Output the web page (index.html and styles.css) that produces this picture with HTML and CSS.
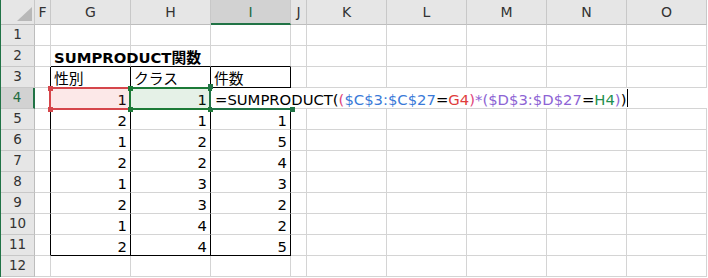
FILE: index.html
```html
<!DOCTYPE html>
<html lang="ja">
<head>
<meta charset="utf-8">
<title>SUMPRODUCT関数</title>
<link rel="stylesheet" href="styles.css">
</head>
<body>
<div class="sheet">
  <div class="r hdr">
    <div class="c corner"><span class="tri"></span></div>
    <div class="c ch">F</div><div class="c ch">G</div><div class="c ch">H</div><div class="c ch sel">I</div><div class="c ch">J</div><div class="c ch">K</div><div class="c ch">L</div><div class="c ch">M</div><div class="c ch">N</div><div class="c ch">O</div>
  </div>
  <div class="r">
    <div class="c rh">1</div>
    <div class="c"></div><div class="c"></div><div class="c"></div><div class="c"></div><div class="c"></div><div class="c"></div><div class="c"></div><div class="c"></div><div class="c"></div><div class="c"></div>
  </div>
  <div class="r">
    <div class="c rh">2</div>
    <div class="c"></div><div class="c tb ov title">SUMPRODUCT関数</div><div class="c tb"></div><div class="c tb"></div><div class="c"></div><div class="c"></div><div class="c"></div><div class="c"></div><div class="c"></div><div class="c"></div>
  </div>
  <div class="r">
    <div class="c rh">3</div>
    <div class="c tr"></div><div class="c tr tb txt">性別</div><div class="c tr tb txt">クラス</div><div class="c tr tb txt">件数</div><div class="c"></div><div class="c"></div><div class="c"></div><div class="c"></div><div class="c"></div><div class="c"></div>
  </div>
  <div class="r">
    <div class="c rh rsel">4</div>
    <div class="c tr"></div><div class="c tr num">1</div><div class="c tr num">1</div><div class="c tr"></div><div class="c"></div><div class="c"></div><div class="c"></div><div class="c"></div><div class="c"></div><div class="c"></div>
  </div>
  <div class="r">
    <div class="c rh">5</div>
    <div class="c tr"></div><div class="c tr num">2</div><div class="c tr num">1</div><div class="c tr num">1</div><div class="c"></div><div class="c"></div><div class="c"></div><div class="c"></div><div class="c"></div><div class="c"></div>
  </div>
  <div class="r">
    <div class="c rh">6</div>
    <div class="c tr"></div><div class="c tr num">1</div><div class="c tr num">2</div><div class="c tr num">5</div><div class="c"></div><div class="c"></div><div class="c"></div><div class="c"></div><div class="c"></div><div class="c"></div>
  </div>
  <div class="r">
    <div class="c rh">7</div>
    <div class="c tr"></div><div class="c tr num">2</div><div class="c tr num">2</div><div class="c tr num">4</div><div class="c"></div><div class="c"></div><div class="c"></div><div class="c"></div><div class="c"></div><div class="c"></div>
  </div>
  <div class="r">
    <div class="c rh">8</div>
    <div class="c tr"></div><div class="c tr num">1</div><div class="c tr num">3</div><div class="c tr num">3</div><div class="c"></div><div class="c"></div><div class="c"></div><div class="c"></div><div class="c"></div><div class="c"></div>
  </div>
  <div class="r">
    <div class="c rh">9</div>
    <div class="c tr"></div><div class="c tr num">2</div><div class="c tr num">3</div><div class="c tr num">2</div><div class="c"></div><div class="c"></div><div class="c"></div><div class="c"></div><div class="c"></div><div class="c"></div>
  </div>
  <div class="r">
    <div class="c rh">10</div>
    <div class="c tr"></div><div class="c tr num">1</div><div class="c tr num">4</div><div class="c tr num">2</div><div class="c"></div><div class="c"></div><div class="c"></div><div class="c"></div><div class="c"></div><div class="c"></div>
  </div>
  <div class="r">
    <div class="c rh">11</div>
    <div class="c tr"></div><div class="c tr tb num">2</div><div class="c tr tb num">4</div><div class="c tr tb num">5</div><div class="c"></div><div class="c"></div><div class="c"></div><div class="c"></div><div class="c"></div><div class="c"></div>
  </div>
  <div class="r">
    <div class="c rh">12</div>
    <div class="c"></div><div class="c"></div><div class="c"></div><div class="c"></div><div class="c"></div><div class="c"></div><div class="c"></div><div class="c"></div><div class="c"></div><div class="c"></div>
  </div>

  <div class="ref ref-red"><i class="h tl"></i><i class="h tr2"></i><i class="h bl"></i><i class="h br"></i></div>
  <div class="ref ref-green"><i class="h tl"></i><i class="h tr2"></i><i class="h bl"></i><i class="h br"></i></div>
  <div class="editor"><span class="k">=SUMPRODUCT(</span><span class="p1">(</span><span class="blue">$C$3:$C$27</span><span class="k">=</span><span class="red">G4</span><span class="p1">)</span><span class="pu">*(</span><span class="pu">$D$3:$D$27</span><span class="k">=</span><span class="gr">H4</span><span class="pu">)</span><span class="k">)</span><span class="caret"></span></div>
  <div class="active"><i class="h tl"></i><i class="h br"></i></div>
</div>
</body>
</html>
```
FILE: styles.css
```css
html, body { margin: 0; padding: 0; background: #fff; }
body { width: 708px; height: 278px; overflow: hidden; }

.sheet {
  position: relative;
  width: 707px;
  border-left: 1px solid #217346;
  font-family: "DejaVu Sans", "Noto Sans CJK JP", sans-serif;
  font-size: 14.8px;
  color: #000;
}

.r {
  display: grid;
  grid-template-columns: 34px 16px 80px 80px 80px 16px 80px 80px 80px 80px 80px;
  height: 21px;
}
.r.hdr { height: 25px; }

.c {
  box-sizing: border-box;
  border-right: 1px solid #d4d4d4;
  border-bottom: 1px solid #d4d4d4;
  display: flex;
  align-items: flex-end;
  line-height: 17px;
  padding: 0 3px 0 3px;
  white-space: nowrap;
  min-width: 0;
}

.hdr .c {
  background: #e6e6e6;
  border-right-color: #c8c8c8;
  border-bottom-color: #bdbdbd;
  justify-content: center;
  align-items: center;
  font-size: 14px;
  color: #333;
  padding: 0;
}
.hdr .c.sel {
  background: #d2d2d2;
  color: #1d6b40;
  border-bottom: 2px solid #217346;
  padding-top: 1px;
}
.corner { position: relative; }
.tri {
  position: absolute;
  right: 2px;
  bottom: 3px;
  width: 0; height: 0;
  border-left: 15px solid transparent;
  border-bottom: 14px solid #b8b8b8;
}

.rh {
  background: #e6e6e6;
  border-right-color: #bdbdbd !important;
  border-bottom-color: #c8c8c8 !important;
  justify-content: center;
  font-size: 13.5px;
  color: #333;
  padding: 0 0 2px 0;
}
.rh.rsel {
  background: #d2d2d2;
  color: #1d6b40;
  border-right: 2px solid #217346 !important;
}

.tr { border-right-color: #000; }
.tb { border-bottom-color: #000; }

.num { justify-content: flex-end; }
.title { font-weight: bold; }
.ov { overflow: visible; }

/* reference highlights */
.ref {
  position: absolute;
  box-sizing: border-box;
  top: 87px;
  height: 23px;
  width: 82px;
  border: 2px solid;
}
.ref-red { left: 48px; border-color: #d5464b; background: rgba(232, 80, 80, 0.13); }
.ref-green { left: 128px; border-color: #1c7a37; background: rgba(40, 140, 60, 0.12); }
.h {
  position: absolute;
  width: 5px; height: 5px;
}
.ref-red .h { background: #d5464b; }
.ref-green .h { background: #1c7a37; }
.h.tl { left: -3.5px; top: -3.5px; }
.h.tr2 { right: -3.5px; top: -3.5px; }
.h.bl { left: -3.5px; bottom: -3.5px; }
.h.br { right: -3.5px; bottom: -3.5px; }

.active {
  position: absolute;
  box-sizing: border-box;
  left: 208px;
  top: 87px;
  width: 82px;
  height: 23px;
  border-left: 2px solid #217346;
  border-bottom: 2px solid #217346;
}
.active .h { background: #217346; }

.editor {
  position: absolute;
  left: 211px;
  top: 88px;
  width: 496px;
  height: 20px;
  background: #fff;
  box-sizing: border-box;
  padding: 0 0 0 3px;
  display: flex;
  align-items: flex-end;
  line-height: 17px;
  white-space: nowrap;
  font-size: 14.8px;
}
.k { color: #000; }
.p1 { color: #e0457b; }
.blue { color: #3a7ad8; }
.red { color: #e03c3c; }
.pu { color: #8d64d4; }
.gr { color: #1f8f4e; }
.caret {
  display: inline-block;
  width: 1px;
  height: 18px;
  background: #000;
  margin-left: 1px;
  align-self: center;
}
```
